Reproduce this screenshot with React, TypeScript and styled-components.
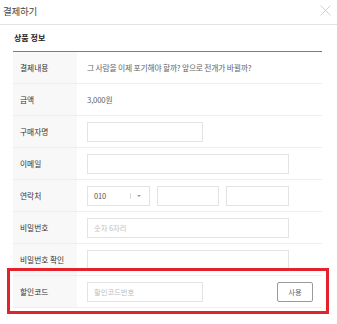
import React from "react";
import styled, { createGlobalStyle } from "styled-components";

const Global = createGlobalStyle`
  html, body { margin: 0; padding: 0; background: #fff; }
  body { font-family: "Noto Sans CJK KR", "Noto Sans", sans-serif; color: #333; }
  * { box-sizing: border-box; }
`;

const Modal = styled.div`
  width: 337px;
  height: 324px;
  background: #fff;
  overflow: hidden;
`;

const Header = styled.div`
  height: 25px;
  border-bottom: 1px solid #e2e2e2;
  display: flex;
  align-items: center;
  justify-content: space-between;
  padding: 0 6px 3px 3px;
`;

const Title = styled.h1`
  margin: 0;
  font-size: 9.5px;
  font-weight: 400;
  color: #444;
  letter-spacing: -0.2px;
`;

const CloseButton = styled.button`
  border: 0;
  background: none;
  padding: 0;
  width: 12px;
  height: 12px;
  display: flex;
  align-items: center;
  justify-content: center;
  cursor: pointer;
`;

const Body = styled.div`
  padding: 0 15px 0 13px;
`;

const SectionTitle = styled.h2`
  margin: 0;
  height: 27px;
  display: flex;
  align-items: center;
  padding: 0 0 2px 1px;
  font-size: 8px;
  font-weight: 700;
  color: #222;
  border-bottom: 1px solid #7d7d7d;
`;

const Table = styled.div`
  display: flex;
  flex-direction: column;
`;

const Row = styled.div`
  position: relative;
  display: grid;
  grid-template-columns: 64px 1fr;
  height: 32px;
  border-bottom: 1px solid #eeeeee;
`;

const Label = styled.div`
  background: #f8f8f8;
  display: flex;
  align-items: center;
  padding-left: 7px;
  font-size: 7.7px;
  color: #333;
`;

const Cell = styled.div<{ $spread?: boolean }>`
  display: flex;
  align-items: center;
  gap: 7px;
  padding-left: 10px;
  padding-right: 9px;
  justify-content: ${(p) => (p.$spread ? "space-between" : "flex-start")};
  font-size: 7.8px;
  color: #666;
  letter-spacing: -0.2px;
`;

const Input = styled.input<{ $w: number }>`
  width: ${(p) => p.$w}px;
  height: 20px;
  border: 1px solid #e3e3e3;
  background: #fff;
  padding: 0 6px;
  font-family: inherit;
  font-size: 7.3px;
  color: #555;
  outline: none;
  &::placeholder { color: #bdbdbd; }
`;

const Select = styled.div`
  width: 63px;
  height: 20px;
  border: 1px solid #e3e3e3;
  display: flex;
  align-items: center;
  padding: 0 6px;
  font-size: 7.5px;
  color: #555;
`;

const SelectValue = styled.span`
  flex: 1;
`;

const SelectDivider = styled.span`
  width: 1px;
  height: 6px;
  background: #ddd;
  margin-right: 6px;
`;

const Arrow = styled.span`
  width: 0;
  height: 0;
  border-left: 2px solid transparent;
  border-right: 2px solid transparent;
  border-top: 2.5px solid #999;
  margin-right: 2px;
`;

const UseButton = styled.button`
  width: 36px;
  height: 20px;
  border: 1px solid #9a9a9a;
  border-radius: 2px;
  background: #fff;
  font-family: inherit;
  font-size: 7.3px;
  color: #666;
  padding: 0;
`;

const Highlight = styled.div`
  position: absolute;
  left: -6px;
  right: -7px;
  top: -8px;
  bottom: -7px;
  border: 3px solid #e3232c;
  pointer-events: none;
`;

export default function App() {
  return (
    <>
      <Global />
      <Modal>
        <Header>
          <Title>결제하기</Title>
          <CloseButton aria-label="닫기">
            <svg width="11" height="11" viewBox="0 0 11 11">
              <path d="M0.5 0.5 L10.5 10.5 M10.5 0.5 L0.5 10.5" stroke="#c4c4c4" strokeWidth="0.8" fill="none" />
            </svg>
          </CloseButton>
        </Header>
        <Body>
          <SectionTitle>상품 정보</SectionTitle>
          <Table>
            <Row>
              <Label>결제내용</Label>
              <Cell>그 사람을 이제 포기해야 할까? 앞으로 전개가 바뀔까?</Cell>
            </Row>
            <Row>
              <Label>금액</Label>
              <Cell>3,000원</Cell>
            </Row>
            <Row>
              <Label>구매자명</Label>
              <Cell>
                <Input $w={116} />
              </Cell>
            </Row>
            <Row>
              <Label>이메일</Label>
              <Cell>
                <Input $w={202} />
              </Cell>
            </Row>
            <Row>
              <Label>연락처</Label>
              <Cell>
                <Select>
                  <SelectValue>010</SelectValue>
                  <SelectDivider />
                  <Arrow />
                </Select>
                <Input $w={62} />
                <Input $w={63} />
              </Cell>
            </Row>
            <Row>
              <Label>비밀번호</Label>
              <Cell>
                <Input $w={202} placeholder="숫자 6자리" />
              </Cell>
            </Row>
            <Row>
              <Label>비밀번호 확인</Label>
              <Cell>
                <Input $w={202} />
              </Cell>
            </Row>
            <Row>
              <Label>할인코드</Label>
              <Cell $spread>
                <Input $w={116} placeholder="할인코드번호" />
                <UseButton>사용</UseButton>
              </Cell>
              <Highlight />
            </Row>
          </Table>
        </Body>
      </Modal>
    </>
  );
}
